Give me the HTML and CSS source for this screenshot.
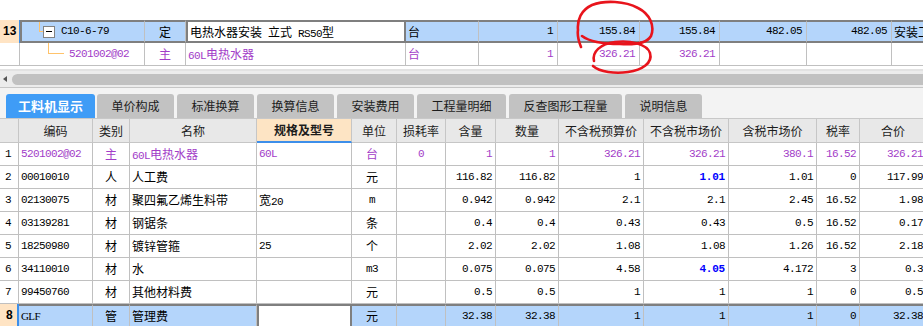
FILE: index.html
```html
<!DOCTYPE html>
<html lang="zh-CN">
<head>
<meta charset="utf-8">
<title>工料机显示</title>
<link rel="stylesheet" href="styles.css">
</head>
<body>
<div class="top">
  <div class="trow sel">
    <div class="rh">13</div>
    <div class="c first tree1"><span class="elbow1"></span><span class="tbox"></span><span class="n tcode">C10-6-79</span></div>
    <div class="c ctr">定</div>
    <div class="c edit">电热水器安装<span class="n"> </span>立式<span class="n"> RS50</span>型</div>
    <div class="c">台</div>
    <div class="c r n">1</div>
    <div class="c r n">155.84</div>
    <div class="c r n">155.84</div>
    <div class="c r n">482.05</div>
    <div class="c r n">482.05</div>
    <div class="c">安装工程</div>
  </div>
  <div class="trow sub">
    <div class="rh"></div>
    <div class="c tree2"><span class="elbow2"></span><span class="n tcode">5201002@02</span></div>
    <div class="c ctr">主</div>
    <div class="c"><span class="n">60L</span>电热水器</div>
    <div class="c">台</div>
    <div class="c r n">1</div>
    <div class="c r n">326.21</div>
    <div class="c r n">326.21</div>
    <div class="c"></div>
    <div class="c"></div>
    <div class="c"></div>
  </div>
</div>

<div class="hscroll"><span class="arrow"></span><span class="thumb"></span></div>

<div class="panel">
  <div class="tabs">
    <div class="tab active">工料机显示</div>
    <div class="tab">单价构成</div>
    <div class="tab">标准换算</div>
    <div class="tab">换算信息</div>
    <div class="tab">安装费用</div>
    <div class="tab">工程量明细</div>
    <div class="tab">反查图形工程量</div>
    <div class="tab">说明信息</div>
  </div>
</div>

<div class="lower">
  <div class="lrow lhead">
    <div></div><div>编码</div><div>类别</div><div>名称</div><div class="spec">规格及型号</div><div>单位</div><div>损耗率</div><div>含量</div><div>数量</div><div>不含税预算价</div><div>不含税市场价</div><div>含税市场价</div><div>税率</div><div>合价</div>
  </div>
  <div class="lrow main">
    <div class="rn n">1</div><div class="n">5201002@02</div><div class="ctr">主</div><div><span class="n">60L</span>电热水器</div><div class="n">60L</div><div class="ctr u">台</div><div class="ctr n">0</div><div class="r n">1</div><div class="r n">1</div><div class="r n">326.21</div><div class="r n">326.21</div><div class="r n">380.1</div><div class="r n">16.52</div><div class="r n">326.21</div>
  </div>
  <div class="lrow">
    <div class="rn n">2</div><div class="n">00010010</div><div class="ctr">人</div><div>人工费</div><div></div><div class="ctr u">元</div><div></div><div class="r n">116.82</div><div class="r n">116.82</div><div class="r n">1</div><div class="r n b">1.01</div><div class="r n">1.01</div><div class="r n">0</div><div class="r n">117.99</div>
  </div>
  <div class="lrow">
    <div class="rn n">3</div><div class="n">02130075</div><div class="ctr">材</div><div>聚四氟乙烯生料带</div><div>宽<span class="n">20</span></div><div class="ctr u n">m</div><div></div><div class="r n">0.942</div><div class="r n">0.942</div><div class="r n">2.1</div><div class="r n">2.1</div><div class="r n">2.45</div><div class="r n">16.52</div><div class="r n">1.98</div>
  </div>
  <div class="lrow">
    <div class="rn n">4</div><div class="n">03139281</div><div class="ctr">材</div><div>钢锯条</div><div></div><div class="ctr u">条</div><div></div><div class="r n">0.4</div><div class="r n">0.4</div><div class="r n">0.43</div><div class="r n">0.43</div><div class="r n">0.5</div><div class="r n">16.52</div><div class="r n">0.17</div>
  </div>
  <div class="lrow">
    <div class="rn n">5</div><div class="n">18250980</div><div class="ctr">材</div><div>镀锌管箍</div><div class="n">25</div><div class="ctr u">个</div><div></div><div class="r n">2.02</div><div class="r n">2.02</div><div class="r n">1.08</div><div class="r n">1.08</div><div class="r n">1.26</div><div class="r n">16.52</div><div class="r n">2.18</div>
  </div>
  <div class="lrow">
    <div class="rn n">6</div><div class="n">34110010</div><div class="ctr">材</div><div>水</div><div></div><div class="ctr u n">m3</div><div></div><div class="r n">0.075</div><div class="r n">0.075</div><div class="r n">4.58</div><div class="r n b">4.05</div><div class="r n">4.172</div><div class="r n">3</div><div class="r n">0.3</div>
  </div>
  <div class="lrow">
    <div class="rn n">7</div><div class="n">99450760</div><div class="ctr">材</div><div>其他材料费</div><div></div><div class="ctr u">元</div><div></div><div class="r n">0.5</div><div class="r n">0.5</div><div class="r n">1</div><div class="r n">1</div><div class="r n">1</div><div class="r n">0</div><div class="r n">0.5</div>
  </div>
  <div class="lrow sel">
    <div class="rn rsel">8</div><div class="n glf">GLF</div><div class="ctr">管</div><div>管理费</div><div class="edit"></div><div class="ctr u">元</div><div></div><div class="r n">32.38</div><div class="r n">32.38</div><div class="r n">1</div><div class="r n">1</div><div class="r n">1</div><div class="r n">0</div><div class="r n">32.38</div>
  </div>
</div>

<svg class="marks" width="923" height="326" viewBox="0 0 923 326" aria-hidden="true">
  <path d="M581 47 C579 42, 577 36, 578 30 C577 20, 581 10, 592 5 C605 0, 625 1, 638 8 C650 14, 655 26, 651 36 C647 43, 635 45, 620 44 C605 44, 590 42, 582 36" />
  <path d="M594 61 C592 52, 600 44, 615 42 C630 40, 647 44, 650 53 C653 63, 642 70, 628 72 C615 74, 600 72, 593 66" />
</svg>
</body>
</html>
```

FILE: styles.css
```css
* { box-sizing: border-box; margin: 0; padding: 0; }
html, body { width: 923px; height: 326px; overflow: hidden; background: #fff; }
body {
  position: relative;
  font-family: "Noto Sans CJK SC", "Noto Sans", sans-serif;
  font-size: 12px;
  color: #000;
}
.n {
  font-family: "Liberation Mono", "Noto Sans CJK SC", monospace;
  font-size: 11px;
  letter-spacing: -0.6px;
}

/* ---------- top grid ---------- */
.top { padding-top: 20px; width: 960px; }
.trow {
  display: grid;
  grid-template-columns: 20px 125px 41px 220px 73px 79px 82px 80px 87px 85px 60px;
  height: 23px;
}
.trow > div {
  border-right: 1px solid #c0c0c0;
  border-bottom: 1px solid #c0c0c0;
  line-height: 22px;
  padding: 0 2px;
  white-space: nowrap;
  overflow: hidden;
}
.trow .r { text-align: right; padding-right: 4px; }
.ctr { text-align: center; }
.trow.sel > .c {
  background: #b4d5fb;
  border-top: 2px solid #7f7f7f;
  border-bottom: 2px solid #7f7f7f;
  line-height: 19px;
}
.trow.sel > .first { border-left: 2px solid #7f7f7f; }
.trow.sel > .edit {
  background: #fff;
  border-left: 2px solid #7f7f7f;
  border-right: 2px solid #7f7f7f;
}
.trow .rh {
  padding: 0 0 0 3px;
  font-family: "Liberation Sans", sans-serif;
  font-weight: bold;
  font-size: 12px;
}
.trow.sel .rh {
  background: #ffe4c4;
  border-bottom: none;
  border-right: 1px solid #3d8fea;
  line-height: 23px;
}
.trow.sub > div { color: #a23cc8; }

.tree1, .tree2 { display: flex; padding: 0 !important; }
.elbow1 {
  flex: none;
  margin-left: 17px;
  width: 4px;
  height: 10px;
  border-left: 1px solid #ffc36b;
  border-bottom: 1px solid #ffc36b;
}
.tbox {
  flex: none;
  align-self: center;
  width: 12px;
  height: 12px;
  border: 1px solid #828282;
  background: #fff;
  display: flex;
  align-items: center;
  justify-content: center;
}
.tbox::before { content: ""; width: 6px; height: 1px; background: #000; }
.tree1 .tcode { margin-left: 6px; }
.elbow2 {
  flex: none;
  margin-left: 28px;
  width: 16px;
  height: 11px;
  border-left: 1px solid #ffc36b;
  border-bottom: 1px solid #ffc36b;
}
.tree2 .tcode { margin-left: 5px; }

/* ---------- horizontal scrollbar ---------- */
.hscroll {
  margin-top: 3px;
  height: 18px;
  background: #ececec;
  border-top: 2px solid #e2e2e2;
  display: flex;
  align-items: center;
  padding-left: 3px;
}
.arrow {
  flex: none;
  width: 0;
  height: 0;
  border-top: 3px solid transparent;
  border-bottom: 3px solid transparent;
  border-right: 4px solid #555;
}
.thumb {
  flex: 1;
  height: 11px;
  margin-left: 5px;
  background: #c1c1c1;
  border-radius: 6px 0 0 6px;
}

/* ---------- tabs ---------- */
.panel {
  border-top: 1px solid #c6c6c6;
  background: #f3f3f3;
  padding: 6px 0 0 6px;
}
.tabs { display: flex; gap: 3px; height: 24px; }
.tab {
  background: #c2c2c2;
  border-radius: 3px 3px 0 0;
  padding: 0 14.5px;
  line-height: 24px;
  color: #1c1c1c;
  white-space: nowrap;
}
.tab.active {
  background: #3f9cf6;
  color: #fff;
  font-weight: bold;
  font-size: 13px;
  padding: 0 12px;
  margin-right: -1px;
}

/* ---------- lower grid ---------- */
.lower { width: 927px; }
.lrow {
  display: grid;
  grid-template-columns: 19px 74px 37px 127px 95px 45px 49px 50px 63px 85px 85px 88px 43px 67px;
  height: 23px;
}
.lrow > div {
  border-right: 1px solid #c0c0c0;
  border-bottom: 1px solid #c0c0c0;
  line-height: 22px;
  padding: 0 2px;
  white-space: nowrap;
  overflow: hidden;
}
.lrow .r { text-align: right; padding-right: 3px; }
.lrow .u { padding-right: 6px; }
.lrow .rn { padding-left: 5px; }
.lrow .b { color: #0000ff; font-weight: bold; letter-spacing: -0.2px; }

.lhead { height: 25px; border-top: 1px solid #c8c8c8; }
.lhead > div {
  background: #e8e8e8;
  text-align: center;
  line-height: 23px;
  color: #1c1c1c;
  border-right-color: #c6c6c6;
  border-bottom-color: #c6c6c6;
}
.lhead > .spec {
  background: #fde4c4;
  font-weight: bold;
  border-bottom: 2px solid #3d8fea;
  line-height: 22px;
}

.lrow.main > div { color: #a23cc8; }
.lrow.main > div:first-child { color: #000; }

.lrow.sel > div {
  background: #b4d5fb;
  border-top: 2px solid #7f7f7f;
  line-height: 20px;
}
.lrow.sel > .rsel {
  background: #ffe4c4;
  border-top: none;
  border-right: 2px solid #3d8fea;
  line-height: 22px;
  padding-left: 6px;
  font-family: "Liberation Sans", sans-serif;
  font-weight: bold;
  font-size: 12px;
}
.lrow.sel > .edit {
  background: #fff;
  border-left: 2px solid #7f7f7f;
  border-right: 2px solid #7f7f7f;
}
.glf { font-family: "Liberation Serif", serif; font-size: 11px; }

/* ---------- annotation marks ---------- */
.marks {
  position: absolute;
  left: 0;
  top: 0;
  pointer-events: none;
  fill: none;
  stroke: #e8141c;
  stroke-width: 2.6;
  stroke-linecap: round;
  stroke-linejoin: round;
}
```
